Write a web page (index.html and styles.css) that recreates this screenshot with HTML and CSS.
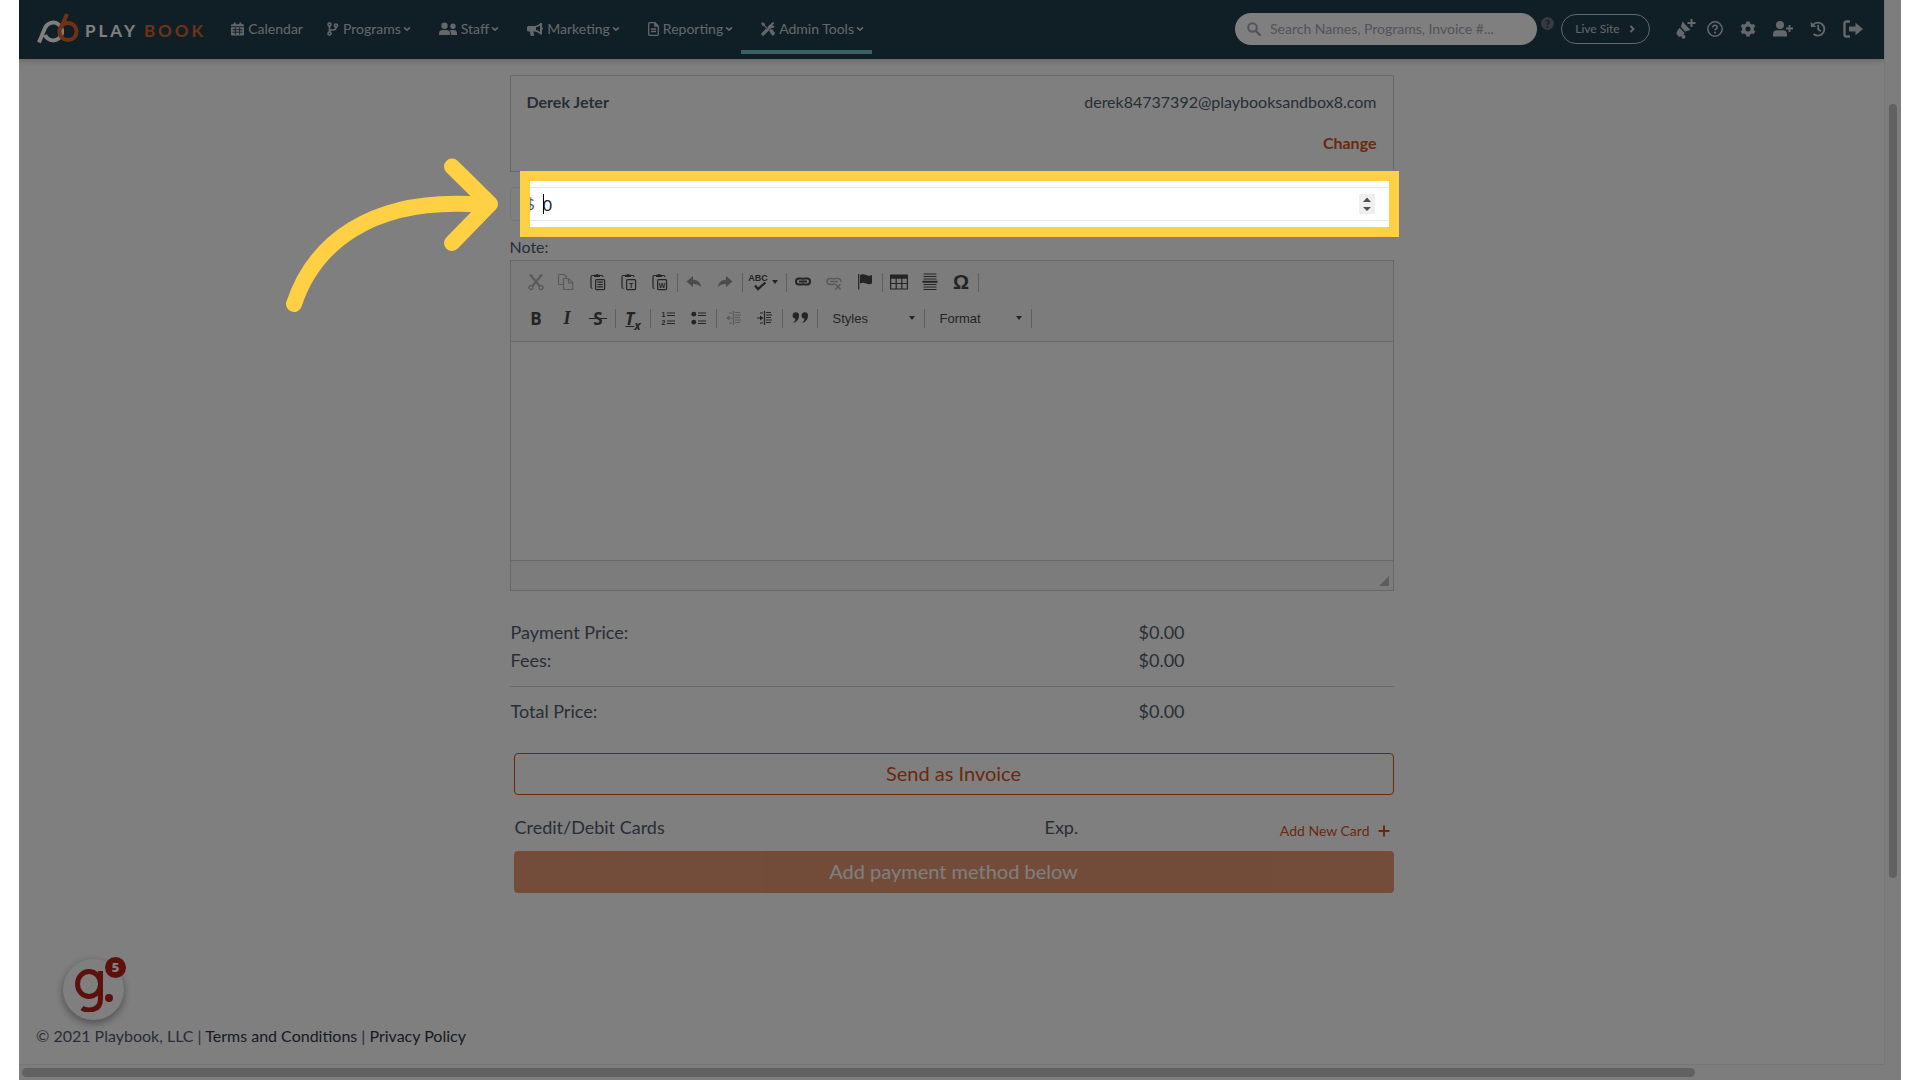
FILE: index.html
```html
<!DOCTYPE html>
<html lang="en">
<head>
<meta charset="utf-8">
<title>Playbook - Custom Payment</title>
<meta name="viewport" content="width=device-width, initial-scale=1">
<link rel="stylesheet" href="styles.css">
</head>
<body>
<svg class="defs" aria-hidden="true">
  <symbol id="chev" viewBox="0 0 8 8"><path d="M1.5 2.8 4 5.2 6.5 2.8" fill="none" stroke="currentColor" stroke-width="1.6" stroke-linecap="round" stroke-linejoin="round"/></symbol>
  <symbol id="clip" viewBox="0 0 18 18"><path d="M5 2.500H3.200Q2 2.500 2 4v10q0 1.500 1.500 1.500M11 2.500h1.500Q14 2.500 14 4" fill="none" stroke="currentColor" stroke-width="1.200"/><path d="M5 1.800h1.700a1.400 1.400 0 0 1 2.600 0H11V4H5z" fill="currentColor"/><rect x="6.600" y="6.600" width="9" height="10" rx="1" fill="none" stroke="currentColor" stroke-width="1.200"/></symbol>
</svg>
<div class="frame">
  <div class="view">
    <header class="topbar">
      <a class="brand" href="#" aria-label="Playbook home">
        <svg class="brand-mark" viewBox="0 0 44 32" aria-hidden="true">
          <g fill="none" stroke-width="4">
            <path d="M2 29.500 8 15A8.900 8.900 0 1 1 8 22" stroke="#fff"/>
            <path d="M30 1 24 15" stroke="#e0642a"/>
            <circle cx="31" cy="18.500" r="8.600" stroke="#e0642a"/>
          </g>
        </svg>
        <span class="brand-name">PLAY</span><span class="brand-name brand-alt">BOOK</span>
      </a>
      <nav class="menu">
        <a class="menu-item flat" href="#"><svg viewBox="0 0 14 14" width="13" height="14"><path d="M3 0h2v2h4V0h2v2h2q1 0 1 1v1H0V3q0-1 1-1h2zM0 5h14v8q0 1-1 1H1q-1 0-1-1z" fill="currentColor"/><path d="M4.700 5.500V13M9.300 5.500V13M1.500 7.700h11M1.500 10.400h11" stroke="#203c4a"/></svg>Calendar</a>
        <a class="menu-item" href="#"><svg viewBox="0 0 12 14" width="12" height="14"><g fill="none" stroke="currentColor" stroke-width="1.600"><circle cx="2.500" cy="2.500" r="1.500"/><circle cx="2.500" cy="11.500" r="1.500"/><circle cx="9" cy="3.500" r="1.500"/><path d="M2.500 4v6M9 5q0 3-3 3H4.500q-2 0-2 2"/></g></svg>Programs<svg class="chev"><use href="#chev"/></svg></a>
        <a class="menu-item" href="#"><svg viewBox="0 0 18 14" width="18" height="14"><g fill="currentColor"><circle cx="5.500" cy="3.800" r="3.200"/><path d="M0 13v-1.500q0-3.500 3.500-3.500h4Q11 8 11 11.500V13zM12 13h6v-1.500Q18 8 15 8h-3q-1 0-1.500.5Q12 9.500 12 11.500z"/><circle cx="14" cy="4.300" r="2.700"/></g></svg>Staff<svg class="chev"><use href="#chev"/></svg></a>
        <a class="menu-item" href="#"><svg viewBox="0 0 16 14" width="16" height="14"><path d="M1.500 4H8q3-.3 5.500-3H15v4.600q1 .4 1 1.100t-1 1.100V12.500h-1.500Q11 10 8 9.500H6.500q-.2 2 1 3.700Q7 14 5.500 14H4Q2.800 12 3 9.500H1.500Q0 9.500 0 8.200V5.500Q0 4 1.500 4z" fill="currentColor"/><path d="M13 3.500v6.400q-2-1.600-4-1.900V5.300q2-.3 4-1.800z" fill="#203c4a"/></svg>Marketing<svg class="chev"><use href="#chev"/></svg></a>
        <a class="menu-item" href="#"><svg viewBox="0 0 11 14" width="11" height="14"><path d="M1.700.7H7l3.300 3.300v8.300q0 1-1 1H1.700q-1 0-1-1V1.700q0-1 1-1zM6.800.7V4h3.400M3 7h5M3 9.500h5" fill="none" stroke="currentColor" stroke-width="1.300"/></svg>Reporting<svg class="chev"><use href="#chev"/></svg></a>
        <a class="menu-item active" href="#"><svg viewBox="0 0 14 14" width="14" height="14"><path d="M2 12 10 4" stroke="currentColor" stroke-width="3.200" stroke-linecap="round"/><path d="M10.300 4.500A2.600 2.600 0 0 1 13 1.200M13 4.200A2.600 2.600 0 0 1 8.500 3" fill="none" stroke="currentColor" stroke-width="1.800"/><path d="M0 1.500 1.500 0 4 1.500v1.700l3 3L6 7.200l-3-3H1.500zM8 9l1-2h2l3 3.500q.3 2-1.500 3.300-1 .2-1.500-.3z" fill="currentColor" stroke="#203c4a" stroke-width=".4"/></svg>Admin Tools<svg class="chev"><use href="#chev"/></svg></a>
      </nav>
      <div class="tools">
        <label class="search">
          <svg viewBox="0 0 14 14" width="14" height="14" aria-hidden="true"><circle cx="5.500" cy="5.500" r="4.300" fill="none" stroke="currentColor" stroke-width="2"/><path d="m9 9 3.800 3.800" stroke="currentColor" stroke-width="2.400" stroke-linecap="round"/></svg>
          <input type="search" aria-label="Search" placeholder="Search Names, Programs, Invoice #...">
        </label>
        <span class="hint">?</span>
        <button class="live" type="button">Live Site <svg viewBox="0 0 8 8" width="8" height="8"><path d="M2.500 1 5.500 4l-3 3" fill="none" stroke="currentColor" stroke-width="1.800"/></svg></button>
        <div class="actions">
          <button class="announce" type="button" aria-label="Announcements"><svg viewBox="0 0 22 22" width="22" height="22"><path d="m8.500 3.500 8 8.500-5.300 1.500-4.400-4.600zM5.500 9.700l5.200 5.200Q9.500 17.500 5 19l-2.700-3.500Q3 12 5.500 9.700z" fill="currentColor"/><circle cx="9.500" cy="18.800" r="2" fill="currentColor"/><path d="M17.500 1v8M13.500 5h8" stroke="currentColor" stroke-width="2"/></svg></button>
          <button type="button" aria-label="Help"><svg viewBox="0 0 16 16" width="16" height="16"><circle cx="8" cy="8" r="7.200" fill="none" stroke="currentColor" stroke-width="1.500"/><path d="M5.800 6.300Q6 4.300 8 4.300t2.200 1.900Q10.200 7.300 9 8q-1 .6-1 1.300" fill="none" stroke="currentColor" stroke-width="1.600"/><circle cx="8" cy="11.500" r="1.100" fill="currentColor"/></svg></button>
          <button type="button" aria-label="Settings"><svg viewBox="0 0 16 16" width="16" height="16"><circle cx="8" cy="8" r="4.200" fill="none" stroke="currentColor" stroke-width="3.400"/><path d="M8 .5V4M8 12v3.500M1.500 4.300l3 1.700M11.500 10l3 1.700M1.500 11.700l3-1.700M11.500 6l3-1.700" stroke="currentColor" stroke-width="3.600"/></svg></button>
          <button type="button" aria-label="Add user"><svg viewBox="0 0 20 16" width="20" height="16"><circle cx="7" cy="4" r="4" fill="currentColor"/><path d="M0 15.500v-2Q0 9.300 4 9.300h6q4 0 4 4.200v2z" fill="currentColor"/><path d="M16.500 4v7M13 7.500h7" stroke="currentColor" stroke-width="1.800"/></svg></button>
          <button type="button" aria-label="History"><svg viewBox="0 0 16 16" width="16" height="16"><path d="M3 3.800A6.500 6.500 0 1 1 3.600 13M8.200 4v4.300l2.600 2" fill="none" stroke="currentColor" stroke-width="1.900"/><path d="M.5.800 1 6.200l5.300-.4z" fill="currentColor"/></svg></button>
          <button type="button" aria-label="Log out"><svg viewBox="0 0 20 18" width="20" height="18"><path d="M7 1.500H3.500q-2 0-2 2v11q0 2 2 2H7" fill="none" stroke="currentColor" stroke-width="2.400"/><path d="M6 6.500h6.500V2.800L20 9l-7.500 6.200v-3.700H6z" fill="currentColor"/></svg></button>
        </div>
      </div>
    </header>

    <main class="content">
      <form class="payment">
        <section class="customer">
          <div class="customer-row"><strong>Derek Jeter</strong><span>derek84737392@playbooksandbox8.com</span></div>
          <a class="change" href="#">Change</a>
        </section>

        <div class="amount">
          <label class="currency" for="amount">$</label>
          <input id="amount" type="number" value="0">
          <span class="caret"></span>
          <span class="spinner" aria-hidden="true"><svg viewBox="0 0 16 20" width="16" height="20"><path d="M4 8 8 3.500 12 8zM4 13l4 4 4-4z" fill="#505050"/></svg></span>
          <div class="spotlight"></div>
          <svg class="pointer" viewBox="280 152 230 170" aria-hidden="true"><g fill="none" stroke="#ffd043" stroke-width="16" stroke-linecap="round" stroke-linejoin="round"><path d="M294 304C313 247 368 195 484 205"/><path d="M452 166.500 490 204l-38 39"/></g></svg>
        </div>

        <label class="note-label" for="note">Note:</label>
        <div class="editor">
          <div class="toolbar">
            <div class="bar">
              <button type="button" class="off" aria-label="Cut"><svg viewBox="0 0 18 18"><path d="M3 1.500 12.500 13M15 1.500 5.500 13" stroke="currentColor" stroke-width="2.200"/><g fill="none" stroke="currentColor" stroke-width="1.300"><circle cx="4" cy="14.500" r="2"/><circle cx="14" cy="14.500" r="2"/></g></svg></button>
              <button type="button" class="off" aria-label="Copy"><svg viewBox="0 0 18 18"><g fill="none" stroke="currentColor" stroke-width="1.200"><path d="M5 11.500H.5v-10H6l3 3M5.500 5.500h5.200l4 4v7H5.500zM10.500 5.500V10h4"/></g></svg></button>
              <button type="button" aria-label="Paste"><svg viewBox="0 0 18 18"><use href="#clip"/><path d="M8.300 9.200h5.600M8.300 11.500h5.600M8.300 13.800h5.600" stroke="currentColor" stroke-width="1.200"/></svg></button>
              <button type="button" aria-label="Paste as plain text"><svg viewBox="0 0 18 18"><use href="#clip"/><text x="11.100" y="14.500" class="micro">T</text></svg></button>
              <button type="button" aria-label="Paste from Word"><svg viewBox="0 0 18 18"><use href="#clip"/><text x="11.100" y="14.500" class="micro">W</text></svg></button>
              <i class="sep"></i>
              <button type="button" class="off dim" aria-label="Undo"><svg viewBox="0 0 18 18"><path d="M1.500 8.500 8 3v3.500q7 .5 8.500 8-3-4-8.500-3.500v3z" fill="currentColor"/></svg></button>
              <button type="button" class="off dim" aria-label="Redo"><svg viewBox="0 0 18 18"><path d="M16.500 8.500 10 3v3.500q-7 .5-8.500 8 3-4 8.500-3.500v3z" fill="currentColor"/></svg></button>
              <i class="sep"></i>
              <button type="button" class="spell" aria-label="Spell check"><svg viewBox="0 0 18 18"><text x="8" y="8" class="abc">ABC</text><path d="m5 12.500 3 3.500 7.500-6.500" fill="none" stroke="currentColor" stroke-width="2.300"/></svg><b class="tri"></b></button>
              <i class="sep"></i>
              <button type="button" aria-label="Link"><svg viewBox="0 0 18 18"><g fill="none" stroke="currentColor" stroke-width="2"><path d="M8 5.500H5a3 3 0 0 0 0 6h3a3 3 0 0 0 2-1M10 11.500h3a3 3 0 0 0 0-6h-3a3 3 0 0 0-2 1M5 8.500h8"/></g></svg></button>
              <button type="button" class="off" aria-label="Unlink"><svg viewBox="0 0 18 18"><g fill="none" stroke="currentColor" stroke-width="1.600"><path d="M8 5.500H5a3 3 0 0 0 0 6h3a3 3 0 0 0 2-1M16 9a3 3 0 0 0-3-3.500h-3a3 3 0 0 0-2 1M5 8.500h8M10.500 11l5 5.500M15.500 11l-5 5.500"/></g></svg></button>
              <button type="button" aria-label="Anchor"><svg viewBox="0 0 18 18"><path d="M2.700 1v15.500" stroke="currentColor" stroke-width="1.200"/><path d="M4 2q3-1.500 6 0t6 0v8.500q-3 1.500-6 0t-6 0z" fill="currentColor"/></svg></button>
              <i class="sep"></i>
              <button type="button" aria-label="Table"><svg viewBox="0 0 18 18"><path d="M.6 5h16.800v11H.6zM6.200 5v11M11.800 5v11M.6 10.500h16.800" fill="none" stroke="currentColor" stroke-width="1.200"/><path d="M0 1.500h18v4H0z" fill="currentColor"/></svg></button>
              <button type="button" aria-label="Horizontal line"><svg viewBox="0 0 18 18"><path d="M2.500 1h13M2.500 3.500h13M2.500 6h13M2.500 11.500h13M2.500 14h13M2.500 16.500h13" stroke="currentColor"/><path d="M1.500 8.800h15" stroke="currentColor" stroke-width="2"/></svg></button>
              <button type="button" class="omega" aria-label="Special character">Ω</button>
              <i class="sep"></i>
            </div>
            <div class="bar bar-wide">
              <button type="button" class="glyph" aria-label="Bold">B</button>
              <button type="button" class="glyph slant" aria-label="Italic">I</button>
              <button type="button" class="glyph" aria-label="Strikethrough"><s>&nbsp;S&nbsp;</s></button>
              <i class="sep"></i>
              <button type="button" class="glyph clear" aria-label="Remove format"><u>T</u><sub>x</sub></button>
              <i class="sep"></i>
              <button type="button" aria-label="Numbered list"><svg viewBox="0 0 18 18"><text x="4.500" y="8" class="micro">1</text><text x="4.500" y="16" class="micro">2</text><path d="M8 4h8M8 6.500h8M8 12h8M8 14.500h8" stroke="currentColor"/></svg></button>
              <button type="button" aria-label="Bulleted list"><svg viewBox="0 0 18 18"><circle cx="3.800" cy="5.200" r="2.400" fill="currentColor"/><circle cx="3.800" cy="13.200" r="2.400" fill="currentColor"/><path d="M8 4h8M8 6.500h8M8 12h8M8 14.500h8" stroke="currentColor"/></svg></button>
              <i class="sep"></i>
              <button type="button" class="off" aria-label="Decrease indent"><svg viewBox="0 0 18 18"><path d="M8.500 2v14M10 3.500h5M10 6h6M10 8.500h5M10 11h6M10 13.500h5M3 9h4M4 4h3M4 14h3" stroke="currentColor" stroke-width="1.200"/><path d="m1 9 3.500-2.500v5z" fill="currentColor"/></svg></button>
              <button type="button" aria-label="Increase indent"><svg viewBox="0 0 18 18"><path d="M8.500 2v14M10 3.500h5M10 6h6M10 8.500h5M10 11h6M10 13.500h5M1 9h4M4 4h3M4 14h3" stroke="currentColor" stroke-width="1.200"/><path d="M7.500 9 4 6.500v5z" fill="currentColor"/></svg></button>
              <i class="sep"></i>
              <button type="button" aria-label="Block quote"><svg viewBox="0 0 18 18"><path d="M8 6.500A3.200 3.200 0 1 0 4.500 9.700Q4.500 12 2 14q6-1.500 6-7.500zM17 6.500a3.200 3.200 0 1 0-3.500 3.200q0 2.300-2.500 4.300 6-1.500 6-7.500z" fill="currentColor"/></svg></button>
              <i class="sep"></i>
              <button type="button" class="combo">Styles<b class="tri"></b></button>
              <i class="sep"></i>
              <button type="button" class="combo">Format<b class="tri"></b></button>
              <i class="sep"></i>
            </div>
          </div>
          <textarea id="note"></textarea>
          <div class="editor-foot"><svg viewBox="0 0 10 10" width="10" height="10"><path d="M10 0v10H0z" fill="#bababa"/></svg></div>
        </div>

        <dl class="totals">
          <div class="line"><dt>Payment Price:</dt><dd>$0.00</dd></div>
          <div class="line"><dt>Fees:</dt><dd>$0.00</dd></div>
          <div class="line sum"><dt>Total Price:</dt><dd>$0.00</dd></div>
        </dl>

        <div class="pay">
          <button class="btn outline" type="button">Send as Invoice</button>
          <div class="cards"><span>Credit/Debit Cards</span><span>Exp.</span><a href="#">Add New Card<svg viewBox="0 0 12 12" width="12" height="12"><path d="M6 .5v11M.5 6h11" stroke="currentColor" stroke-width="2"/></svg></a></div>
          <button class="btn filled" type="button" disabled>Add payment method below</button>
        </div>
      </form>
      <footer class="footer">© 2021 Playbook, LLC | <a href="#">Terms and Conditions</a> | <a href="#">Privacy Policy</a></footer>
      <button class="bubble" type="button" aria-label="Guides">
        <svg viewBox="0 0 40 44" width="40" height="44" aria-hidden="true"><g fill="none" stroke="#b8231a" stroke-width="5"><ellipse cx="15" cy="16" rx="11.500" ry="12.500"/><path d="M26.500 3v28q0 11-12 11-4 0-6.500-2"/></g><circle cx="35" cy="30" r="4" fill="#b8231a"/></svg>
        <span class="count">5</span>
      </button>
    </main>
  </div>
  <div class="scroll-y"><span></span></div>
  <div class="scroll-x"><span></span></div>
  <div class="corner"></div>
</div>
</body>
</html>
```
FILE: styles.css
```css
* { box-sizing: border-box; }

body {
  margin: 0;
  background: #fff;
  color: #505b6e;
  font: 16px/24px Lato, "Open Sans", sans-serif;
}

button, input, textarea { font: inherit; color: inherit; }
button { padding: 0; border: 0; background: none; }
a { color: inherit; text-decoration: none; }
.defs { position: absolute; width: 0; height: 0; }

.frame {
  display: grid;
  grid-template-columns: minmax(0, 1fr) 17px;
  grid-template-rows: 1fr 16px;
  min-height: 100vh;
  margin: 0 19px;
  overflow: hidden;
  background: #fff;
}

.view { display: flex; flex-direction: column; }

/* Top bar */
.topbar {
  display: flex;
  align-items: center;
  height: 59px;
  padding: 0 21px 2px 18px;
  background: #203c4a;
  color: #cbd0d4;
  box-shadow: 0 2px 6px rgba(0, 0, 0, .2);
}
.brand { display: flex; align-items: center; }
.brand-mark { width: 44px; height: 32px; margin-right: 4px; }
.brand-name { font-size: 17px; font-weight: 700; letter-spacing: 3px; color: #fff; padding-top: 4px; }
.brand-alt { color: #e0642a; margin-left: 6px; }
.menu { display: flex; margin-left: 5px; font-size: 14px; }
.menu-item {
  display: flex;
  align-items: center;
  gap: 4px;
  height: 50px;
  padding: 0 8px 0 20px;
  border: solid transparent;
  border-width: 4px 0;
}
.menu-item.flat { padding-right: 4px; }
.menu-item.active { border-bottom-color: #70c6c0; }
.chev { width: 8px; height: 8px; margin-left: -2px; }

.tools { display: flex; align-items: center; margin-left: auto; }
.search {
  display: flex;
  align-items: center;
  gap: 9px;
  width: 302px;
  height: 32px;
  padding: 0 12px;
  border-radius: 16px;
  background: #fff;
  color: #a0a8b8;
}
.search input { flex: 1; min-width: 0; padding: 0; border: 0; background: none; outline: 0; font-size: 14px; }
.search input::placeholder { color: #a0a8b8; }
.hint {
  align-self: flex-start;
  margin: 4px 7px 0 4px;
  width: 13px;
  height: 13px;
  border-radius: 50%;
  background: #6b7486;
  color: #203c4a;
  font-size: 11px;
  font-weight: 900;
  line-height: 13px;
  text-align: center;
}
.live {
  display: flex;
  align-items: center;
  justify-content: center;
  gap: 8px;
  width: 89px;
  height: 30px;
  border: 1px solid #cbd0d4;
  border-radius: 15px;
  font-size: 12px;
}
.actions { display: flex; align-items: center; margin-left: 24px; gap: 17px; }
.actions button { display: flex; align-items: center; height: 32px; }
.actions .announce { margin-right: -6px; }

/* Payment form */
.content { position: relative; flex: 1; display: flex; flex-direction: column; }
.payment { width: 100%; max-width: 884px; margin: 16px auto 0; }
.customer { height: 97px; padding: 14px 16px; border: 1px solid #d1d1d1; }
.customer-row { display: flex; justify-content: space-between; }
.change { display: block; margin-top: 17px; text-align: right; font-weight: 700; color: #d55317; }

.amount {
  position: relative;
  display: flex;
  align-items: center;
  height: 34px;
  margin-top: 15px;
  padding: 0 18px 0 15px;
  border: 1px solid #e2e8f0;
  border-radius: 4px;
}
.amount input {
  flex: 1;
  min-width: 0;
  height: 30px;
  padding: 0 0 0 8px;
  border: 0;
  outline: 0;
  background: none;
  color: #222;
  appearance: textfield;
}
.caret { position: absolute; left: 32px; top: 6px; width: 1px; height: 20px; background: #000; }
.spinner { display: flex; background: #efefef; }
.spotlight {
  position: absolute;
  z-index: 5;
  inset: -17px -6px -17px 9px;
  border: 10px solid #ffd043;
  box-shadow: 0 0 0 3000px rgba(0, 0, 0, .5);
  pointer-events: none;
}
.pointer { position: absolute; z-index: 6; left: -231px; top: -36px; width: 230px; height: 170px; }

.note-label { display: block; margin: 14px 0 1px; }

/* Rich text editor */
.editor { border: 1px solid #d1d1d1; }
.toolbar { padding: 3px 10px 5px; background: #f8f8f8; border-bottom: 1px solid #d1d1d1; color: #484848; }
.bar { display: flex; align-items: center; height: 36px; }
.bar button { display: flex; align-items: center; justify-content: center; width: 31px; height: 28px; }
.bar button svg { width: 18px; height: 18px; overflow: visible; }
.bar .off { color: #b4b4b4; }
.bar .dim { color: #989898; }
.sep { width: 1px; height: 19px; margin: 0 1px; background: #bcbcbc; }
.bar-wide .sep { margin: 0 2px 0 1px; }
.bar .spell { width: 41px; gap: 4px; }
.tri { width: 0; height: 0; border: solid transparent; border-width: 4px 3px 0; border-top-color: #484848; }
.micro { font: 700 7px "Liberation Sans", sans-serif; text-anchor: middle; fill: currentColor; }
.abc { font: 700 9px "Liberation Sans", sans-serif; text-anchor: middle; fill: currentColor; }
.bar .omega { font: 700 20px "Liberation Sans", sans-serif; }
.bar .glyph { font: 700 17px "Open Sans", sans-serif; }
.bar .slant { font-family: "Liberation Serif", serif; font-style: italic; font-size: 18px; }
.bar .clear { font-style: italic; }
.clear sub { align-self: flex-end; font-size: 12px; line-height: 12px; }
.bar .combo {
  width: 103px;
  justify-content: space-between;
  padding: 0 8px 0 13px;
  font: 13px "Liberation Sans", sans-serif;
}
.editor textarea { display: block; width: 100%; height: 218px; border: 0; outline: 0; resize: none; }
.editor-foot {
  display: flex;
  align-items: flex-end;
  justify-content: flex-end;
  height: 30px;
  padding: 4px;
  border-top: 1px solid #d1d1d1;
  background: #f8f8f8;
}

/* Totals */
.totals { margin: 27px 0 0; font-size: 18px; line-height: 28px; }
.line { display: grid; grid-template-columns: 628px 1fr; padding-left: 1px; }
.line dd { margin: 0; }
.sum { margin-top: 12px; padding-top: 10px; border-top: 1px solid #cbd0e0; }

.pay { margin-top: 28px; padding-left: 4px; }
.btn { display: block; width: 100%; height: 42px; padding-bottom: 2px; border-radius: 4px; font-size: 20px; }
.outline { border: 1px solid #d55317; color: #d55317; }
.filled { background: #d55317; color: #fff; opacity: .6; }
.cards {
  display: grid;
  grid-template-columns: 530px 1fr auto;
  align-items: center;
  height: 56px;
  padding: 8px 4px 0 1px;
  font-size: 18px;
}
.cards a { display: flex; align-items: center; gap: 8px; padding-top: 8px; font-size: 14px; color: #d55317; }

.footer { margin-top: auto; padding: 0 17px 16px; }
.footer a { color: #2d3748; }

.bubble {
  position: absolute;
  left: 44px;
  bottom: 44px;
  width: 61px;
  height: 61px;
  padding: 0;
  border-radius: 50%;
  background: #fff;
  box-shadow: 0 3px 8px rgba(0, 0, 0, .4);
}
.bubble svg { display: block; margin: 0 auto; }
.count {
  position: absolute;
  top: -2px;
  right: -2px;
  width: 21px;
  height: 21px;
  border-radius: 50%;
  background: #b8231a;
  color: #fff;
  font: 800 13px/21px "Open Sans", sans-serif;
}

/* Scroll tracks */
.scroll-y { padding: 104px 4px 0; background: #fafafa; border-left: 1px solid #ececec; }
.scroll-y span { display: block; height: 774px; border-radius: 4px; background: #c2c2c2; }
.scroll-x { padding: 3px; background: #fafafa; border-top: 1px solid #ececec; }
.scroll-x span { display: block; width: 90%; height: 9px; border-radius: 5px; background: #c2c2c2; }
.corner { background: #fafafa; }
```
